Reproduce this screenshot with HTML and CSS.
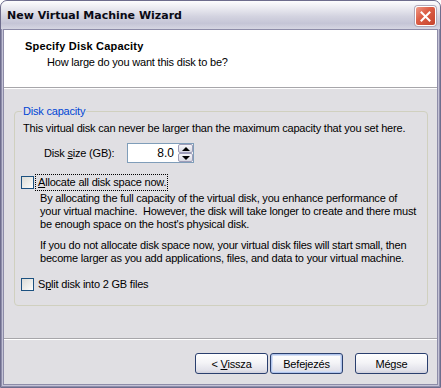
FILE: index.html
```html
<!DOCTYPE html>
<html lang="en">
<head>
    <meta charset="UTF-8">
    <title>New Virtual Machine Wizard</title>
    <link rel="stylesheet" href="styles.css">
</head>
<body>
    <div class="window">
        <div class="titlebar">
            <span class="title">New Virtual Machine Wizard</span>
            <button class="close" aria-label="Close">
                <svg width="11" height="11" viewBox="0 0 11 11">
                    <path d="M1.5 1.5 L9.5 9.5 M9.5 1.5 L1.5 9.5" stroke="#fff" stroke-width="2" stroke-linecap="square"/>
                </svg>
            </button>
        </div>
        <div class="client">
            <div class="header">
                <div class="header-title">Specify Disk Capacity</div>
                <div class="header-sub">How large do you want this disk to be?</div>
            </div>
            <div class="content">
                <fieldset class="group">
                    <legend>Disk capacity</legend>
                    <p class="intro">This virtual disk can never be larger than the maximum capacity that you set here.</p>
                    <div class="size-row">
                        <label class="size-label">Disk <u>s</u>ize (GB):</label>
                        <div class="spin">
                            <span class="spin-value">8.0</span>
                            <div class="spin-btns">
                                <span class="spin-btn"><i class="arrow up"></i></span>
                                <span class="spin-btn"><i class="arrow down"></i></span>
                            </div>
                        </div>
                    </div>
                    <label class="check">
                        <span class="box"></span>
                        <span class="focus"><u>A</u>llocate all disk space now.</span>
                    </label>
                    <p class="note">By allocating the full capacity of the virtual disk, you enhance performance of<br>your virtual machine.&nbsp; However, the disk will take longer to create and there must<br>be enough space on the host's physical disk.</p>
                    <p class="note second">If you do not allocate disk space now, your virtual disk files will start small, then<br>become larger as you add applications, files, and data to your virtual machine.</p>
                    <label class="check split">
                        <span class="box"></span>
                        <span>S<u>p</u>lit disk into 2 GB files</span>
                    </label>
                </fieldset>
            </div>
            <div class="footer">
                <button class="btn">&lt; <u>V</u>issza</button>
                <button class="btn default">Befejezés</button>
                <button class="btn cancel">Mégse</button>
            </div>
        </div>
    </div>
</body>
</html>
```

FILE: styles.css
```css
body {
    margin: 0;
    background: #ffffff;
    font-family: "Liberation Sans", Arial, sans-serif;
    font-size: 11px;
    line-height: 13px;
    letter-spacing: -0.2px;
    color: #000;
}
.window {
    width: 441px;
    height: 388px;
    box-sizing: border-box;
    display: flex;
    flex-direction: column;
    background: #c4c3d6;
    border: 1px solid #6e6d8d;
    border-radius: 7px 7px 0 0;
    padding: 0 2px 2px;
    box-shadow: inset 1px 0 #8f8eab, inset -1px 0 #8f8eab, inset 0 -1px #8f8eab;
}
.titlebar {
    height: 28px;
    margin: 0 -2px;
    display: flex;
    align-items: center;
    justify-content: space-between;
    padding: 0 4px 0 6px;
    border-radius: 6px 6px 0 0;
    background: linear-gradient(#fdfdfe 0%, #ebebf1 25%, #d3d3e0 55%, #c5c5d6 80%, #d6d6e2 100%);
}
.title {
    font-family: "DejaVu Sans", sans-serif;
    font-weight: bold;
    font-size: 11px;
    letter-spacing: 0;
    color: #0a0a14;
    padding-top: 1px;
}
.close {
    width: 21px;
    height: 20px;
    padding: 0;
    margin-top: 2px;
    border: 1px solid #fff;
    border-radius: 3px;
    background: linear-gradient(135deg, #ef9a86 0%, #dd5f47 40%, #c5432c 100%);
    box-shadow: 0 0 0 1px #b0a8b8;
    display: flex;
    align-items: center;
    justify-content: center;
}
.client {
    flex: 1;
    display: flex;
    flex-direction: column;
    background: #e0dfe3;
    border: 1px solid #8d8ca8;
}
.header {
    height: 58px;
    box-sizing: border-box;
    background: #fff;
    padding: 10px 0 0 21px;
    border-bottom: 1px solid #a7a6aa;
}
.header-title {
    font-weight: bold;
    letter-spacing: 0.2px;
}
.header-sub {
    margin-top: 3px;
    padding-left: 22px;
}
.content {
    flex: 1;
    padding: 16px 9px 0 10px;
    border-top: 1px solid #fff;
}
.group {
    margin: 0;
    padding: 0 6px 14px;
    border: 1px solid #d0d0bf;
    border-radius: 4px;
}
.group legend {
    color: #0046d5;
    padding: 0 1px;
    margin-left: 1px;
}
.intro,
.note {
    white-space: nowrap;
}
.intro {
    margin: 4px 0 0 2px;
}
.size-row {
    display: flex;
    align-items: center;
    margin: 8px 0 0 23px;
}
.size-label {
    width: 83px;
}
.spin {
    width: 67px;
    height: 20px;
    box-sizing: border-box;
    display: flex;
    background: #fff;
    border: 1px solid #7f9db9;
}
.spin-value {
    flex: 1;
    text-align: right;
    padding-right: 3px;
    line-height: 18px;
    font-size: 12px;
    letter-spacing: 0;
}
.spin-btns {
    width: 15px;
    display: flex;
    flex-direction: column;
    padding: 0 0 0 1px;
}
.spin-btn {
    flex: 1;
    display: flex;
    align-items: center;
    justify-content: center;
    border: 1px solid #9d9cb8;
    border-radius: 2px;
    background: linear-gradient(#f6f6f9, #d8d8e2);
}
.arrow {
    width: 0;
    height: 0;
    border-left: 4px solid transparent;
    border-right: 4px solid transparent;
}
.arrow.up {
    border-bottom: 4px solid #000;
}
.arrow.down {
    border-top: 4px solid #000;
}
.check {
    display: flex;
    align-items: center;
    margin-top: 13px;
}
.box {
    width: 13px;
    height: 13px;
    box-sizing: border-box;
    border: 1px solid #1c5180;
    background: linear-gradient(135deg, #dcdcd7 0%, #f2f2ef 70%, #fff 100%);
    margin-right: 3px;
}
.focus {
    outline: 1px dotted #000;
    outline-offset: 1px;
    padding-left: 1px;
}
.note {
    margin: 3px 0 0 19px;
}
.note.second {
    margin-top: 8px;
}
.split span + span {
    padding-left: 1px;
}
.footer {
    height: 46px;
    box-sizing: border-box;
    display: flex;
    justify-content: flex-end;
    align-items: flex-start;
    padding: 14px 9px 0 0;
    border-top: 1px solid #a7a6aa;
    box-shadow: inset 0 1px #fff;
}
.btn {
    width: 73px;
    height: 21px;
    padding: 0;
    margin-left: 2px;
    font-family: "Liberation Sans", Arial, sans-serif;
    font-size: 11px;
    letter-spacing: -0.2px;
    color: #000;
    border: 1px solid #2a3f6e;
    border-radius: 3px;
    background: linear-gradient(#ffffff 0%, #f4f4f7 45%, #e2e2ea 85%, #d0d0dc 100%);
}
.btn.default {
    box-shadow: inset 0 0 0 1px #b0c4ec, inset 0 0 0 2px #d4def4;
}
.btn.cancel {
    margin-left: 12px;
}
```
